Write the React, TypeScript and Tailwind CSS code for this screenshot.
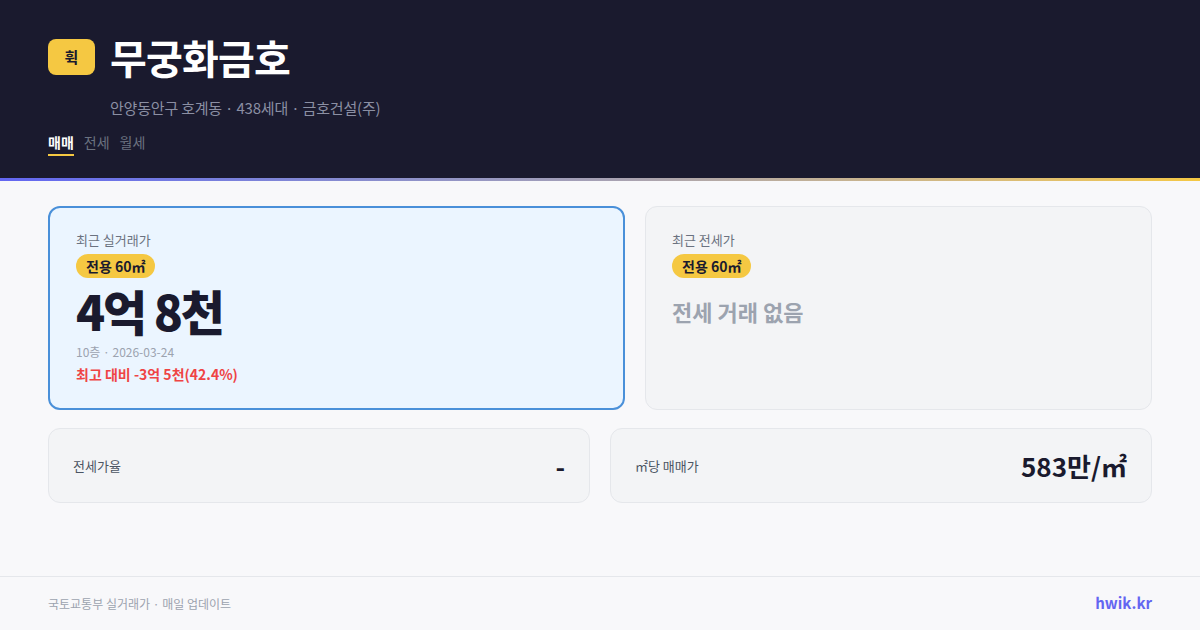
import React from "react";

const font = { fontFamily: '"Noto Sans CJK KR", "Noto Sans", sans-serif' };

export default function App() {
  return (
    <div className="w-[1200px] h-[630px] flex flex-col bg-[#f8f8fa] overflow-hidden" style={font}>
      <header className="bg-[#1a1a2e] h-[178px] pl-12 pt-[39px]">
        <div className="flex items-center gap-[15px] h-[36px]">
          <div className="w-[47px] h-[36px] rounded-lg bg-[#f5c842] flex items-center justify-center text-[15px] font-bold text-[#1a1a2e]">
            휙
          </div>
          <h1 className="text-[40px] font-bold text-white leading-none tracking-[-0.8px]">무궁화금호</h1>
        </div>
        <div className="pl-[62px] mt-[23px] text-[15px] leading-[20px] text-[#8b8fa3] tracking-[-0.2px]">
          안양동안구 호계동 · 438세대 · 금호건설(주)
        </div>
        <div className="flex gap-[10px] mt-[14px] text-[14px] leading-[20px]">
          <div className="font-bold text-white border-b-2 border-[#f5c842] pb-[2px]">매매</div>
          <div className="text-[#6b7280]">전세</div>
          <div className="text-[#6b7280]">월세</div>
        </div>
      </header>
      <div className="h-[3px] bg-gradient-to-r from-[#6366f1] to-[#f5c842]" />
      <main className="flex-1 px-12 pt-[25px]">
        <div className="grid grid-cols-[577px_507px] gap-5">
          <div className="h-[204px] rounded-xl border-2 border-[#4a90d9] bg-[#ebf5ff] px-[26px] pt-[22px]">
            <div className="text-[13px] leading-[20px] text-[#6b7280]">최근 실거래가</div>
            <div className="inline-block mt-[4px] rounded-full bg-[#f5c842] px-[10px] h-[24px] leading-[24px] text-[14px] font-bold text-[#1a1a2e]">
              전용 60㎡
            </div>
            <div className="mt-[2px] text-[48px] font-black leading-[60px] text-[#1a1a2e] tracking-[-2.2px]">4억 8천</div>
            <div className="mt-[3px] text-[12px] leading-[18px] text-[#9ca3af]">10층 · 2026-03-24</div>
            <div className="mt-[3px] text-[14px] leading-[20px] font-bold text-[#ef4444]">최고 대비 -3억 5천(42.4%)</div>
          </div>
          <div className="h-[204px] rounded-xl border border-[#e5e7eb] bg-[#f3f4f6] px-[26px] pt-[23px]">
            <div className="text-[13px] leading-[20px] text-[#6b7280]">최근 전세가</div>
            <div className="inline-block mt-[4px] rounded-full bg-[#f5c842] px-[10px] h-[24px] leading-[24px] text-[14px] font-bold text-[#1a1a2e]">
              전용 60㎡
            </div>
            <div className="mt-[18px] text-[22px] font-bold leading-[30px] text-[#9ca3af]">전세 거래 없음</div>
          </div>
        </div>
        <div className="grid grid-cols-2 gap-5 mt-[18px]">
          <div className="h-[75px] rounded-xl border border-[#e5e7eb] bg-[#f3f4f6] px-6 flex items-center justify-between">
            <div className="text-[13px] text-[#4b5563]">전세가율</div>
            <div className="text-[26px] font-bold text-[#1a1a2e]">-</div>
          </div>
          <div className="h-[75px] rounded-xl border border-[#e5e7eb] bg-[#f3f4f6] px-6 flex items-center justify-between">
            <div className="text-[13px] text-[#4b5563]">㎡당 매매가</div>
            <div className="text-[26px] font-bold text-[#1a1a2e]">583만/㎡</div>
          </div>
        </div>
      </main>
      <footer className="h-[54px] border-t border-[#e5e7eb] px-12 flex items-center justify-between">
        <div className="text-[12px] text-[#9ca3af]">국토교통부 실거래가 · 매일 업데이트</div>
        <div className="text-[15px] font-bold text-[#6366f1]">hwik.kr</div>
      </footer>
    </div>
  );
}
